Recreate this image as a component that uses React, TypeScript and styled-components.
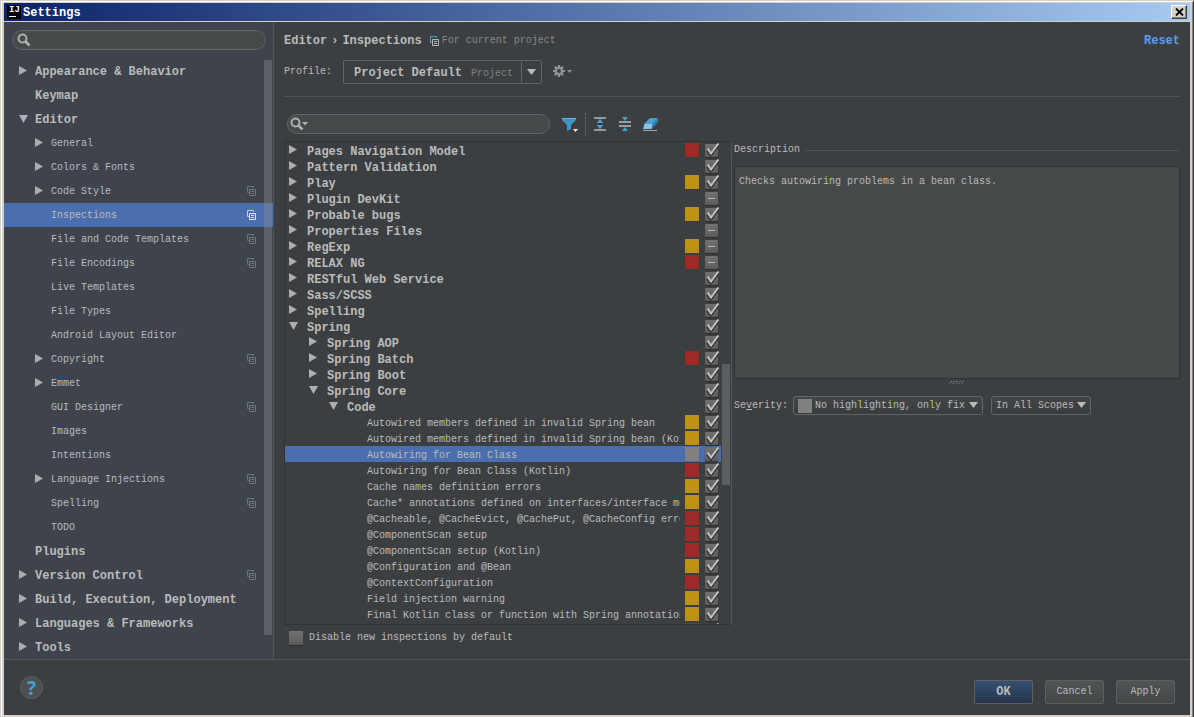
import React, { useState } from "react";
import styled, { createGlobalStyle, css } from "styled-components";

const MONO = '"Liberation Mono", "DejaVu Sans Mono", monospace';

const GlobalStyle = createGlobalStyle`
  *, *::before, *::after { box-sizing: border-box; }
  body { margin: 0; background: #3c3f41; }
  button, input, select, textarea { font: inherit; color: inherit; margin: 0; }
`;

const Window = styled.div`
  display: flex;
  flex-direction: column;
  height: 100vh;
  padding: 2px 3px 2px 3px;
  border: solid #d4d0c8;
  border-width: 1px 1px 0 1px;
  border-right-color: #404040;
  background: #d4d0c8;
  box-shadow: inset 1px 1px 0 #fff, inset -1px 0 0 #808080;
  color: #bbbbbb;
  font: 10px/16px ${MONO};
  white-space: pre;
`;

const TitleBar = styled.header`
  display: flex;
  align-items: center;
  flex: none;
  height: 19px;
  padding: 0 3px;
  gap: 2px;
  border-bottom: 1px solid #d4d0c8;
  background: linear-gradient(90deg, #0a246a, #a6caf0);
`;

const Title = styled.h1`
  flex: 1;
  margin: 0;
  padding-top: 2px;
  color: #fff;
  font: bold 12px/16px ${MONO};
`;

const Logo = styled.span`
  display: flex;
  flex-direction: column;
  width: 14px;
  height: 14px;
  padding: 1px 2px;
  background: #000;
  color: #fff;
  font: bold 9px/9px ${MONO};

  &::after {
    content: "";
    width: 7px;
    height: 1px;
    margin-top: 1px;
    background: #fff;
  }
`;

const CloseButton = styled.button`
  display: grid;
  place-items: center;
  width: 16px;
  height: 14px;
  padding: 0;
  border: 1px solid;
  border-color: #fff #404040 #404040 #fff;
  background: #d4d0c8;
  box-shadow: inset -1px -1px 0 #808080;
`;

const Body = styled.div`
  display: flex;
  flex: 1;
  min-height: 0;
  background: #3c3f41;
`;

const Sidebar = styled.aside`
  display: flex;
  flex-direction: column;
  flex: none;
  width: 270px;
  padding-top: 8px;
  border-right: 1px solid #515557;
  background: #3e434c;
`;

const SearchField = styled.label<{ $width?: number }>`
  display: flex;
  align-items: center;
  flex: none;
  width: ${(p) => (p.$width ? p.$width + "px" : "auto")};
  height: 20px;
  padding: 0 ${(p) => (p.$width ? 2 : 4)}px;
  border: 1px solid #646464;
  border-radius: 10px;
  background: #45494a;

  input {
    flex: 1;
    min-width: 0;
    border: 0;
    outline: 0;
    background: none;
  }
`;

const SidebarSearch = styled.div`
  flex: none;
  padding: 0 7px 9px 8px;
`;

const NavArea = styled.div`
  display: flex;
  flex: 1;
  min-height: 0;
  position: relative;
`;

const Nav = styled.nav`
  flex: 1;
  overflow: hidden;
`;

const NavRow = styled.a<{ $level: number; $selected?: boolean }>`
  display: flex;
  align-items: center;
  gap: 7px;
  height: 24px;
  padding: 0 17px 0 ${(p) => 15 + p.$level * 16}px;
  background: ${(p) => (p.$selected ? "#4b6eaf" : "none")};
  color: #bbbbbb;
  font: ${(p) => (p.$level ? "10px" : "bold 12px")} / 16px ${MONO};
  text-decoration: none;

  span {
    flex: 1;
    padding-top: 2px;
  }
`;

const NavThumb = styled.div`
  position: absolute;
  top: 1px;
  right: 1px;
  bottom: 24px;
  width: 8px;
  background: rgba(140, 140, 145, 0.4);
`;

const Main = styled.main`
  display: flex;
  flex-direction: column;
  flex: 1;
  min-width: 0;
  padding: 8px 10px 11px;
`;

const Crumbs = styled.div`
  display: flex;
  align-items: center;
  gap: 4px;
  height: 20px;
  color: #bbbbbb;
  font: bold 12px/16px ${MONO};

  > * {
    padding-top: 2px;
  }
`;

const CrumbNote = styled.span`
  display: flex;
  align-items: center;
  flex: 1;
  gap: 3px;
  margin-left: 4px;
  color: #888888;
  font: 10px/16px ${MONO};
`;

const ResetLink = styled.a`
  color: #589df6;
  text-decoration: none;
`;

const ProfileRow = styled.div`
  display: flex;
  align-items: center;
  height: 24px;
  margin-top: 10px;

  > label {
    width: 59px;
  }
`;

const ProfileBox = styled.div`
  display: flex;
  align-items: center;
  width: 199px;
  height: 24px;
  border: 1px solid #646464;
  border-radius: 2px;
`;

const bareSelect = css`
  appearance: none;
  min-width: 0;
  padding: 0;
  border: 0;
  outline: 0;
  background: none;
`;

const ProfileSelect = styled.select`
  ${bareSelect}
  width: 117px;
  margin-left: 10px;
  padding-top: 2px;
  font: bold 12px/16px ${MONO};
`;

const ProfileKind = styled.span`
  flex: 1;
  padding-top: 3px;
  color: #808080;
`;

const ArrowCell = styled.span`
  display: grid;
  place-items: center;
  width: 20px;
  height: 22px;
  border-left: 1px solid #646464;
`;

const IconButton = styled.button`
  display: flex;
  align-items: center;
  padding: 0;
  border: 0;
  background: none;
`;

const GearButton = styled(IconButton)`
  margin-left: 11px;
`;

const Rule = styled.hr`
  width: 100%;
  height: 1px;
  margin: 12px 0 17px;
  border: 0;
  background: #515151;
`;

const Columns = styled.div`
  display: flex;
  flex: 1;
  gap: 2px;
  min-height: 0;
`;

const Left = styled.section`
  display: flex;
  flex-direction: column;
  flex: none;
  width: 448px;
`;

const Toolbar = styled.div`
  display: flex;
  align-items: center;
  flex: none;
  height: 20px;
  margin-bottom: 7px;
  padding-left: 3px;
`;

const Tools = styled.div`
  display: flex;
  align-items: center;
  gap: 11px;
  margin-left: 12px;
`;

const ToolDivider = styled.span`
  height: 22px;
  margin: 0 -4px 0 -5px;
  border-left: 1px dotted #777;
`;

const TreeBox = styled.div`
  position: relative;
  flex: 1;
  min-height: 0;
  overflow: hidden;
  border: 1px solid #323232;
  border-right-color: #515557;
`;

const TreeRow = styled.div<{ $level: number; $selected?: boolean }>`
  display: flex;
  align-items: center;
  height: 16px;
  margin-right: 10px;
  padding: 0 3px 0 ${(p) => 4 + p.$level * 20}px;
  background: ${(p) => (p.$selected ? "#4b6eaf" : "none")};
  color: #bbbbbb;
`;

const TreeText = styled.span<{ $bold: boolean }>`
  flex: 1;
  min-width: 0;
  height: 16px;
  margin: 0 5px 0 9px;
  padding-top: 3px;
  overflow: hidden;
  font: ${(p) => (p.$bold ? "bold 12px/14px" : "10px/14px")} ${MONO};
`;

const Swatch = styled.span<{ $color: string }>`
  flex: none;
  width: 14px;
  height: 14px;
  margin-right: 6px;
  background: ${(p) => p.$color};
`;

const CheckWrap = styled.span<{ $size: number }>`
  position: relative;
  display: block;
  flex: none;
  width: ${(p) => p.$size}px;
  height: ${(p) => p.$size}px;

  input {
    display: block;
    appearance: none;
    width: 100%;
    height: 100%;
    border-radius: 1px;
    background: linear-gradient(#717171, #5c5c5c);
    box-shadow: 0 1px 1px #2a2c2d;
  }

  svg {
    position: absolute;
    left: 0;
    bottom: 0;
    overflow: visible;
    pointer-events: none;
  }
`;

const TreeThumb = styled.div`
  position: absolute;
  top: 222px;
  right: 1px;
  width: 8px;
  height: 121px;
  background: #5a5e5f;
`;

const DisableRow = styled.label`
  display: flex;
  align-items: center;
  flex: none;
  gap: 6px;
  height: 20px;
  margin-top: 3px;
  padding-left: 5px;
`;

const Right = styled.section`
  display: flex;
  flex-direction: column;
  flex: 1;
  min-width: 0;
`;

const SectionTitle = styled.label`
  display: flex;
  align-items: center;
  gap: 6px;
  height: 16px;
  margin: 28px 0 8px;

  &::after {
    content: "";
    flex: 1;
    height: 1px;
    margin-right: 2px;
    background: #515557;
  }
`;

const DescriptionText = styled.textarea`
  height: 213px;
  padding: 7px 4px;
  border: 1px solid #323232;
  outline: 0;
  background: #45494a;
  resize: none;
`;

const Grip = styled.div`
  display: flex;
  justify-content: center;
  height: 5px;
`;

const SeverityRow = styled.div`
  display: flex;
  align-items: center;
  margin-top: 12px;

  > label {
    width: 59px;
  }
`;

const Combo = styled.span<{ $width: number }>`
  display: flex;
  align-items: center;
  width: ${(p) => p.$width}px;
  height: 19px;
  margin-right: 8px;
  padding: 0 4px;
  border: 1px solid #646464;
  border-radius: 3px;
  background: linear-gradient(#434647, #393c3e);

  select {
    ${bareSelect}
    flex: 1;
  }

  ${Swatch} {
    margin-right: 3px;
  }
`;

const Footer = styled.footer`
  display: flex;
  align-items: center;
  flex: none;
  height: 56px;
  padding: 0 15px 0 16px;
  gap: 12px;
  border-top: 1px solid #555555;
  background: #3c3f41;
`;

const HelpButton = styled.button`
  width: 23px;
  height: 23px;
  margin-right: auto;
  padding: 0;
  border: 1px solid #5b5f61;
  border-radius: 50%;
  background: #4c5052;
  color: #4a9fd0;
  font: bold 19px/20px "Open Sans", "Noto Sans", sans-serif;
`;

const Button = styled.button<{ $primary?: boolean }>`
  width: 59px;
  height: 24px;
  margin-top: 8px;
  padding: 0;
  border: 1px solid #5e6162;
  border-radius: 2px;
  background: ${(p) =>
    p.$primary ? "linear-gradient(#365070, #25344b)" : "linear-gradient(#505556, #424647)"};
  color: #bbbbbb;
  font: ${(p) => (p.$primary ? "bold 12px" : "10px")} / 16px ${MONO};
`;

function Twisty({ open }: { open?: boolean }) {
  return (
    <svg width="9" height="10" viewBox="0 0 9 10" fill="#afafaf" aria-hidden="true">
      {open ? <path d="M0 1h9L4.500 9z" /> : <path d="M0 0v9l8-4.500z" />}
    </svg>
  );
}

const Spacer = styled.i`
  flex: none;
  width: 9px;
`;

function DropArrow() {
  return (
    <svg width="9" height="9" viewBox="0 0 9 9" fill="#bbbbbb" aria-hidden="true">
      <path d="M0 1h9L4.500 7z" />
    </svg>
  );
}

function CopyIcon({ back, front }: { back: string; front: string }) {
  return (
    <svg width="9" height="10" viewBox="0 0 9 10" fill="none" aria-hidden="true">
      <path d="M2 6.500H.5V.5h6V2" stroke={back} />
      <path d="M2.500 3.500h6v6h-6zM4 5.500h3M4 7.500h3" stroke={front} />
    </svg>
  );
}

function Lens({ menu }: { menu?: boolean }) {
  return (
    <svg width={menu ? 19 : 14} height="14" viewBox={menu ? "0 0 19 14" : "0 0 14 14"} aria-hidden="true">
      <circle cx="5.500" cy="5.500" r="4" fill="none" stroke="#afafaf" strokeWidth="2" />
      <path d="M8.500 8.500l4 4" stroke="#afafaf" strokeWidth="2.600" />
      {menu && <path d="M12 5h6l-3 3.500z" fill="#afafaf" />}
    </svg>
  );
}

function Gear() {
  return (
    <svg width="20" height="14" viewBox="0 0 20 14" aria-hidden="true">
      <g stroke="#8f9192" fill="none">
        <circle cx="6" cy="6" r="3.200" strokeWidth="2.400" />
        <path d="M6 0v2.500M6 9.500V12M0 6h2.500M9.500 6H12M1.800 1.800l1.700 1.700M8.500 8.500l1.700 1.700M10.200 1.800L8.500 3.500M3.500 8.500l-1.700 1.700" strokeWidth="2.200" />
      </g>
      <path d="M14 5h5l-2.500 3z" fill="#8f9192" />
    </svg>
  );
}

function FilterIcon() {
  return (
    <svg width="17" height="16" viewBox="0 0 17 16" aria-hidden="true">
      <path d="M0 2h14v2L9 9v4l-4 2V9L0 4z" fill="#3f93c5" />
      <path d="M0 2h14v1H0z" fill="#6db3da" />
      <path d="M11 13h5l-2.500 3z" fill="#eee" />
    </svg>
  );
}

function ExpandIcon() {
  return (
    <svg width="14" height="16" viewBox="0 0 14 16" aria-hidden="true">
      <path d="M1 1h12v2H1zM1 13h12v2H1z" fill="#9a9c9d" />
      <path d="M7 3l3.500 4h-7zM7 13l3.500-4h-7z" fill="#4b9fd0" />
    </svg>
  );
}

function CollapseIcon() {
  return (
    <svg width="14" height="16" viewBox="0 0 14 16" aria-hidden="true">
      <path d="M1 5h12v2H1zM1 9h12v2H1z" fill="#9a9c9d" />
      <path d="M7 5l3-4H4zM7 11l3 4H4z" fill="#4b9fd0" />
    </svg>
  );
}

function EraserIcon() {
  return (
    <svg width="16" height="16" viewBox="0 0 16 16" aria-hidden="true">
      <path d="M1 8l6-6h8l-5 6z" fill="#4b9fd0" />
      <path d="M9 8l6-6v4l-6 7z" fill="#2f7dab" />
      <path d="M1.500 8H9.500L8.500 13H0z" fill="#8cc6e4" />
      <path d="M0 14.500h14" stroke="#a5a7a8" />
    </svg>
  );
}

function CloseMark() {
  return (
    <svg width="9" height="8" viewBox="0 0 9 8" aria-hidden="true">
      <path d="M1 .5l7 7M8 .5l-7 7" stroke="#000" strokeWidth="1.800" />
    </svg>
  );
}

type CheckState = "on" | "off" | "mixed";

function Check({ initial, label, id, size = 13 }: { initial: CheckState; label?: string; id?: string; size?: number }) {
  const [state, setState] = useState<CheckState>(initial);
  return (
    <CheckWrap $size={size}>
      <input
        id={id}
        type="checkbox"
        aria-label={label}
        checked={state === "on"}
        onChange={() => setState(state === "on" ? "off" : "on")}
      />
      {state === "on" && (
        <svg width="14" height="14" viewBox="0 0 14 14" fill="none" aria-hidden="true">
          <path d="M2.500 7.500L6 12l7.500-10" stroke="#2b2b2b" strokeWidth="2.400" />
          <path d="M2.500 5.500L6 10.500 13.500 0.500" stroke="#c4c4c4" strokeWidth="2" />
        </svg>
      )}
      {state === "mixed" && (
        <svg width="13" height="13" viewBox="0 0 13 13" aria-hidden="true">
          <path d="M3 6.500h7" stroke="#bbbbbb" />
        </svg>
      )}
    </CheckWrap>
  );
}

type NavItem = { text: string; level: number; arrow?: "open" | "closed"; project?: boolean };

const NAV: NavItem[] = [
  { text: "Appearance & Behavior", level: 0, arrow: "closed" },
  { text: "Keymap", level: 0 },
  { text: "Editor", level: 0, arrow: "open" },
  { text: "General", level: 1, arrow: "closed" },
  { text: "Colors & Fonts", level: 1, arrow: "closed" },
  { text: "Code Style", level: 1, arrow: "closed", project: true },
  { text: "Inspections", level: 1, project: true },
  { text: "File and Code Templates", level: 1, project: true },
  { text: "File Encodings", level: 1, project: true },
  { text: "Live Templates", level: 1 },
  { text: "File Types", level: 1 },
  { text: "Android Layout Editor", level: 1 },
  { text: "Copyright", level: 1, arrow: "closed", project: true },
  { text: "Emmet", level: 1, arrow: "closed" },
  { text: "GUI Designer", level: 1, project: true },
  { text: "Images", level: 1 },
  { text: "Intentions", level: 1 },
  { text: "Language Injections", level: 1, arrow: "closed", project: true },
  { text: "Spelling", level: 1, project: true },
  { text: "TODO", level: 1 },
  { text: "Plugins", level: 0 },
  { text: "Version Control", level: 0, arrow: "closed", project: true },
  { text: "Build, Execution, Deployment", level: 0, arrow: "closed" },
  { text: "Languages & Frameworks", level: 0, arrow: "closed" },
  { text: "Tools", level: 0, arrow: "closed" },
];

const RED = "#9e2927";
const YELLOW = "#be9117";
const GRAY = "#808080";
const NONE = "transparent";

type Inspection = [text: string, level: number, color: string, arrow?: "open" | "closed", state?: CheckState];

const INSPECTIONS: Inspection[] = [
  ["Pages Navigation Model", 0, RED, "closed"],
  ["Pattern Validation", 0, NONE, "closed"],
  ["Play", 0, YELLOW, "closed"],
  ["Plugin DevKit", 0, NONE, "closed", "mixed"],
  ["Probable bugs", 0, YELLOW, "closed"],
  ["Properties Files", 0, NONE, "closed", "mixed"],
  ["RegExp", 0, YELLOW, "closed", "mixed"],
  ["RELAX NG", 0, RED, "closed", "mixed"],
  ["RESTful Web Service", 0, NONE, "closed"],
  ["Sass/SCSS", 0, NONE, "closed"],
  ["Spelling", 0, NONE, "closed"],
  ["Spring", 0, NONE, "open"],
  ["Spring AOP", 1, NONE, "closed"],
  ["Spring Batch", 1, RED, "closed"],
  ["Spring Boot", 1, NONE, "closed"],
  ["Spring Core", 1, NONE, "open"],
  ["Code", 2, NONE, "open"],
  ["Autowired members defined in invalid Spring bean", 3, YELLOW],
  ["Autowired members defined in invalid Spring bean (Kotlin)", 3, YELLOW],
  ["Autowiring for Bean Class", 3, GRAY],
  ["Autowiring for Bean Class (Kotlin)", 3, RED],
  ["Cache names definition errors", 3, YELLOW],
  ["Cache* annotations defined on interfaces/interface methods", 3, YELLOW],
  ["@Cacheable, @CacheEvict, @CachePut, @CacheConfig errors", 3, RED],
  ["@ComponentScan setup", 3, RED],
  ["@ComponentScan setup (Kotlin)", 3, RED],
  ["@Configuration and @Bean", 3, YELLOW],
  ["@ContextConfiguration", 3, RED],
  ["Field injection warning", 3, YELLOW],
  ["Final Kotlin class or function with Spring annotation", 3, YELLOW],
  ["", 3, RED],
];

export default function App() {
  const [page, setPage] = useState("Inspections");
  const [inspection, setInspection] = useState("Autowiring for Bean Class");

  return (
    <Window>
      <GlobalStyle />
      <TitleBar>
        <Logo aria-hidden="true">IJ</Logo>
        <Title>Settings</Title>
        <CloseButton aria-label="Close">
          <CloseMark />
        </CloseButton>
      </TitleBar>

      <Body>
        <Sidebar>
          <SidebarSearch>
            <SearchField>
              <Lens />
              <input type="text" aria-label="Search settings" />
            </SearchField>
          </SidebarSearch>
          <NavArea>
            <Nav aria-label="Settings">
              {NAV.map((item) => {
                const selected = item.text === page && item.level === 1;
                return (
                  <NavRow
                    key={item.text}
                    href="#"
                    $level={item.level}
                    $selected={selected}
                    onClick={() => setPage(item.text)}
                  >
                    {item.arrow ? <Twisty open={item.arrow === "open"} /> : <Spacer />}
                    <span>{item.text}</span>
                    {item.project && (
                      <CopyIcon back={selected ? "#b8cfe8" : "#637380"} front={selected ? "#e4e4e4" : "#747779"} />
                    )}
                  </NavRow>
                );
              })}
            </Nav>
            <NavThumb />
          </NavArea>
        </Sidebar>

        <Main>
          <Crumbs>
            <span>Editor</span>
            <span>›</span>
            <span>Inspections</span>
            <CrumbNote>
              <CopyIcon back="#4a9fd0" front="#b4b6b7" />
              For current project
            </CrumbNote>
            <ResetLink href="#">Reset</ResetLink>
          </Crumbs>
          <ProfileRow>
            <label htmlFor="profile">Profile:</label>
            <ProfileBox>
              <ProfileSelect id="profile">
                <option>Project Default</option>
              </ProfileSelect>
              <ProfileKind>Project</ProfileKind>
              <ArrowCell>
                <DropArrow />
              </ArrowCell>
            </ProfileBox>
            <GearButton aria-label="Profile actions">
              <Gear />
            </GearButton>
          </ProfileRow>
          <Rule />

          <Columns>
            <Left>
              <Toolbar>
                <SearchField $width={263}>
                  <Lens menu />
                  <input type="text" aria-label="Search inspections" />
                </SearchField>
                <Tools>
                  <IconButton aria-label="Filter">
                    <FilterIcon />
                  </IconButton>
                  <ToolDivider />
                  <IconButton aria-label="Expand all">
                    <ExpandIcon />
                  </IconButton>
                  <IconButton aria-label="Collapse all">
                    <CollapseIcon />
                  </IconButton>
                  <IconButton aria-label="Reset to empty">
                    <EraserIcon />
                  </IconButton>
                </Tools>
              </Toolbar>
              <TreeBox>
                {INSPECTIONS.map(([text, level, color, arrow, state]) => (
                  <TreeRow
                    key={text}
                    $level={level}
                    $selected={text === inspection}
                    onClick={() => setInspection(text)}
                  >
                    {arrow ? <Twisty open={arrow === "open"} /> : <Spacer />}
                    <TreeText $bold={level < 3}>{text}</TreeText>
                    <Swatch $color={color} />
                    <Check initial={state ?? "on"} label={text || "Inspection"} />
                  </TreeRow>
                ))}
                <TreeThumb />
              </TreeBox>
              <DisableRow htmlFor="disable-new">
                <Check id="disable-new" initial="off" size={14} />
                Disable new inspections by default
              </DisableRow>
            </Left>

            <Right>
              <SectionTitle htmlFor="description">Description</SectionTitle>
              <DescriptionText
                id="description"
                readOnly
                value="Checks autowiring problems in a bean class."
              />
              <Grip>
                <svg width="16" height="5" viewBox="0 0 16 5" aria-hidden="true">
                  <path d="M1 4.500l2-3.500M4 4.500l2-3.500M7 4.500l2-3.500M10 4.500l2-3.500M13 4.500l2-3.500" stroke="#b4b6b7" strokeDasharray="1 1" />
                </svg>
              </Grip>
              <SeverityRow>
                <label htmlFor="severity">
                  Se<u>v</u>erity:
                </label>
                <Combo $width={190}>
                  <Swatch $color={GRAY} />
                  <select id="severity">
                    <option>No highlighting, only fix</option>
                  </select>
                  <DropArrow />
                </Combo>
                <Combo $width={100}>
                  <select aria-label="Scope">
                    <option>In All Scopes</option>
                  </select>
                  <DropArrow />
                </Combo>
              </SeverityRow>
            </Right>
          </Columns>
        </Main>
      </Body>

      <Footer>
        <HelpButton aria-label="Help">?</HelpButton>
        <Button $primary>OK</Button>
        <Button>Cancel</Button>
        <Button>Apply</Button>
      </Footer>
    </Window>
  );
}
